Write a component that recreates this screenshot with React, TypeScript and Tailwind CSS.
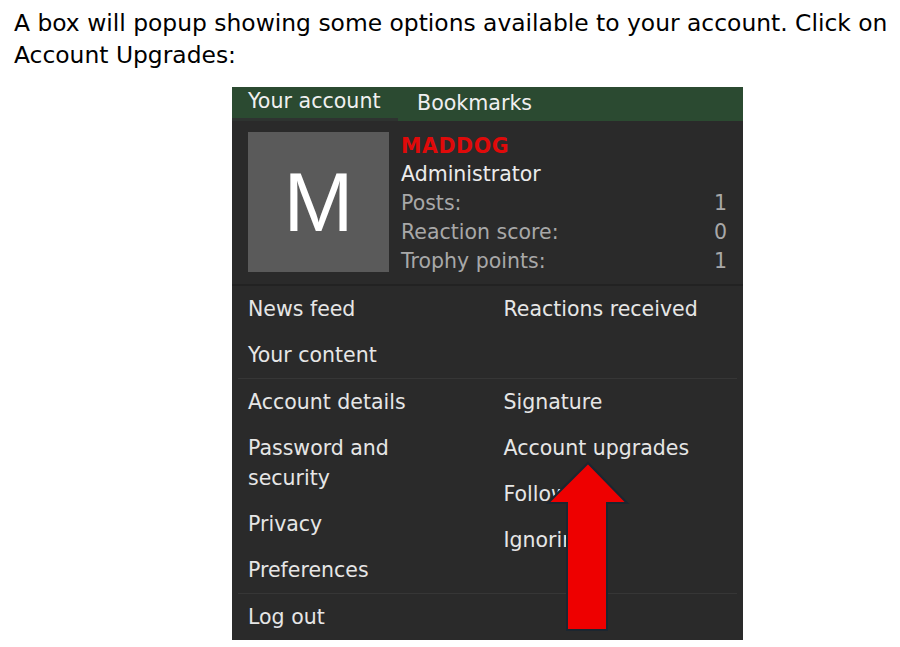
const font = { fontFamily: '"DejaVu Sans", Verdana, sans-serif' };

const stats = [
  { label: 'Posts:', value: '1' },
  { label: 'Reaction score:', value: '0' },
  { label: 'Trophy points:', value: '1' },
];

function Item({ children }: { children: React.ReactNode }) {
  return <div className="px-4 py-2 text-[20.5px] leading-[30px] text-[#e6e6e6]">{children}</div>;
}

export default function App() {
  return (
    <div className="bg-white min-h-[647px] w-[900px] pt-[7px]" style={font}>
      <p className="pl-[14px] pr-[4px] text-[23.4px] leading-[32px] text-black">
        A box will popup showing some options available to your account. Click on Account Upgrades:
      </p>

      <div className="relative ml-[232px] mt-[16px] w-[511px] bg-[#2a2a2a]">
        {/* tabs */}
        <div className="flex h-[34px] bg-[#2b4a31] text-[20.6px] text-[#f0f0f0]">
          <div className="flex w-[166px] items-center border-b-[3px] border-[#2e3330] pl-4 pb-[2px]">Your account</div>
          <div className="flex items-center pl-[19px] pb-[2px]">Bookmarks</div>
        </div>

        {/* profile */}
        <div className="flex gap-3 border-b-2 border-[#222] pl-4 pr-4 pt-[11px] pb-[8px]">
          <div className="flex h-[140px] w-[141px] shrink-0 items-center justify-center bg-[#5a5a5a]">
            <span className="text-[84px] leading-none text-white" style={{ fontFamily: '"Liberation Sans", Arial, sans-serif' }}>
              M
            </span>
          </div>
          <div className="flex flex-1 flex-col pt-[1px]">
            <div className="text-[20.5px] font-black leading-[26px] tracking-[0.6px] text-[#e00a0a]">MADDOG</div>
            <div className="text-[20.5px] leading-[30px] text-[#ececec]">Administrator</div>
            {stats.map((s) => (
              <div key={s.label} className="flex justify-between text-[20.5px] leading-[29px] text-[#a8a8a8]">
                <span>{s.label}</span>
                <span>{s.value}</span>
              </div>
            ))}
          </div>
        </div>

        {/* menu */}
        <div className="grid grid-cols-2">
          <div>
            <Item>News feed</Item>
            <Item>Your content</Item>
          </div>
          <div>
            <Item>Reactions received</Item>
          </div>
        </div>
        <div className="mx-[6px] h-px bg-[#363636]" />
        <div className="grid grid-cols-2">
          <div>
            <Item>Account details</Item>
            <Item>
              Password and
              <br />
              security
            </Item>
            <Item>Privacy</Item>
            <Item>Preferences</Item>
          </div>
          <div>
            <Item>Signature</Item>
            <Item>Account upgrades</Item>
            <Item>Following</Item>
            <Item>Ignoring</Item>
          </div>
        </div>
        <div className="mx-[6px] h-px bg-[#363636]" />
        <Item>Log out</Item>

        {/* pointer arrow */}
        <svg className="absolute left-[314px] top-[374px]" width="84" height="172" viewBox="0 0 84 172">
          <polygon
            points="42,2 81,42 61,42 61,169 21,169 21,42 2,42"
            fill="#ee0000"
            stroke="#1b2630"
            strokeWidth="2"
            strokeLinejoin="miter"
          />
        </svg>
      </div>
    </div>
  );
}
